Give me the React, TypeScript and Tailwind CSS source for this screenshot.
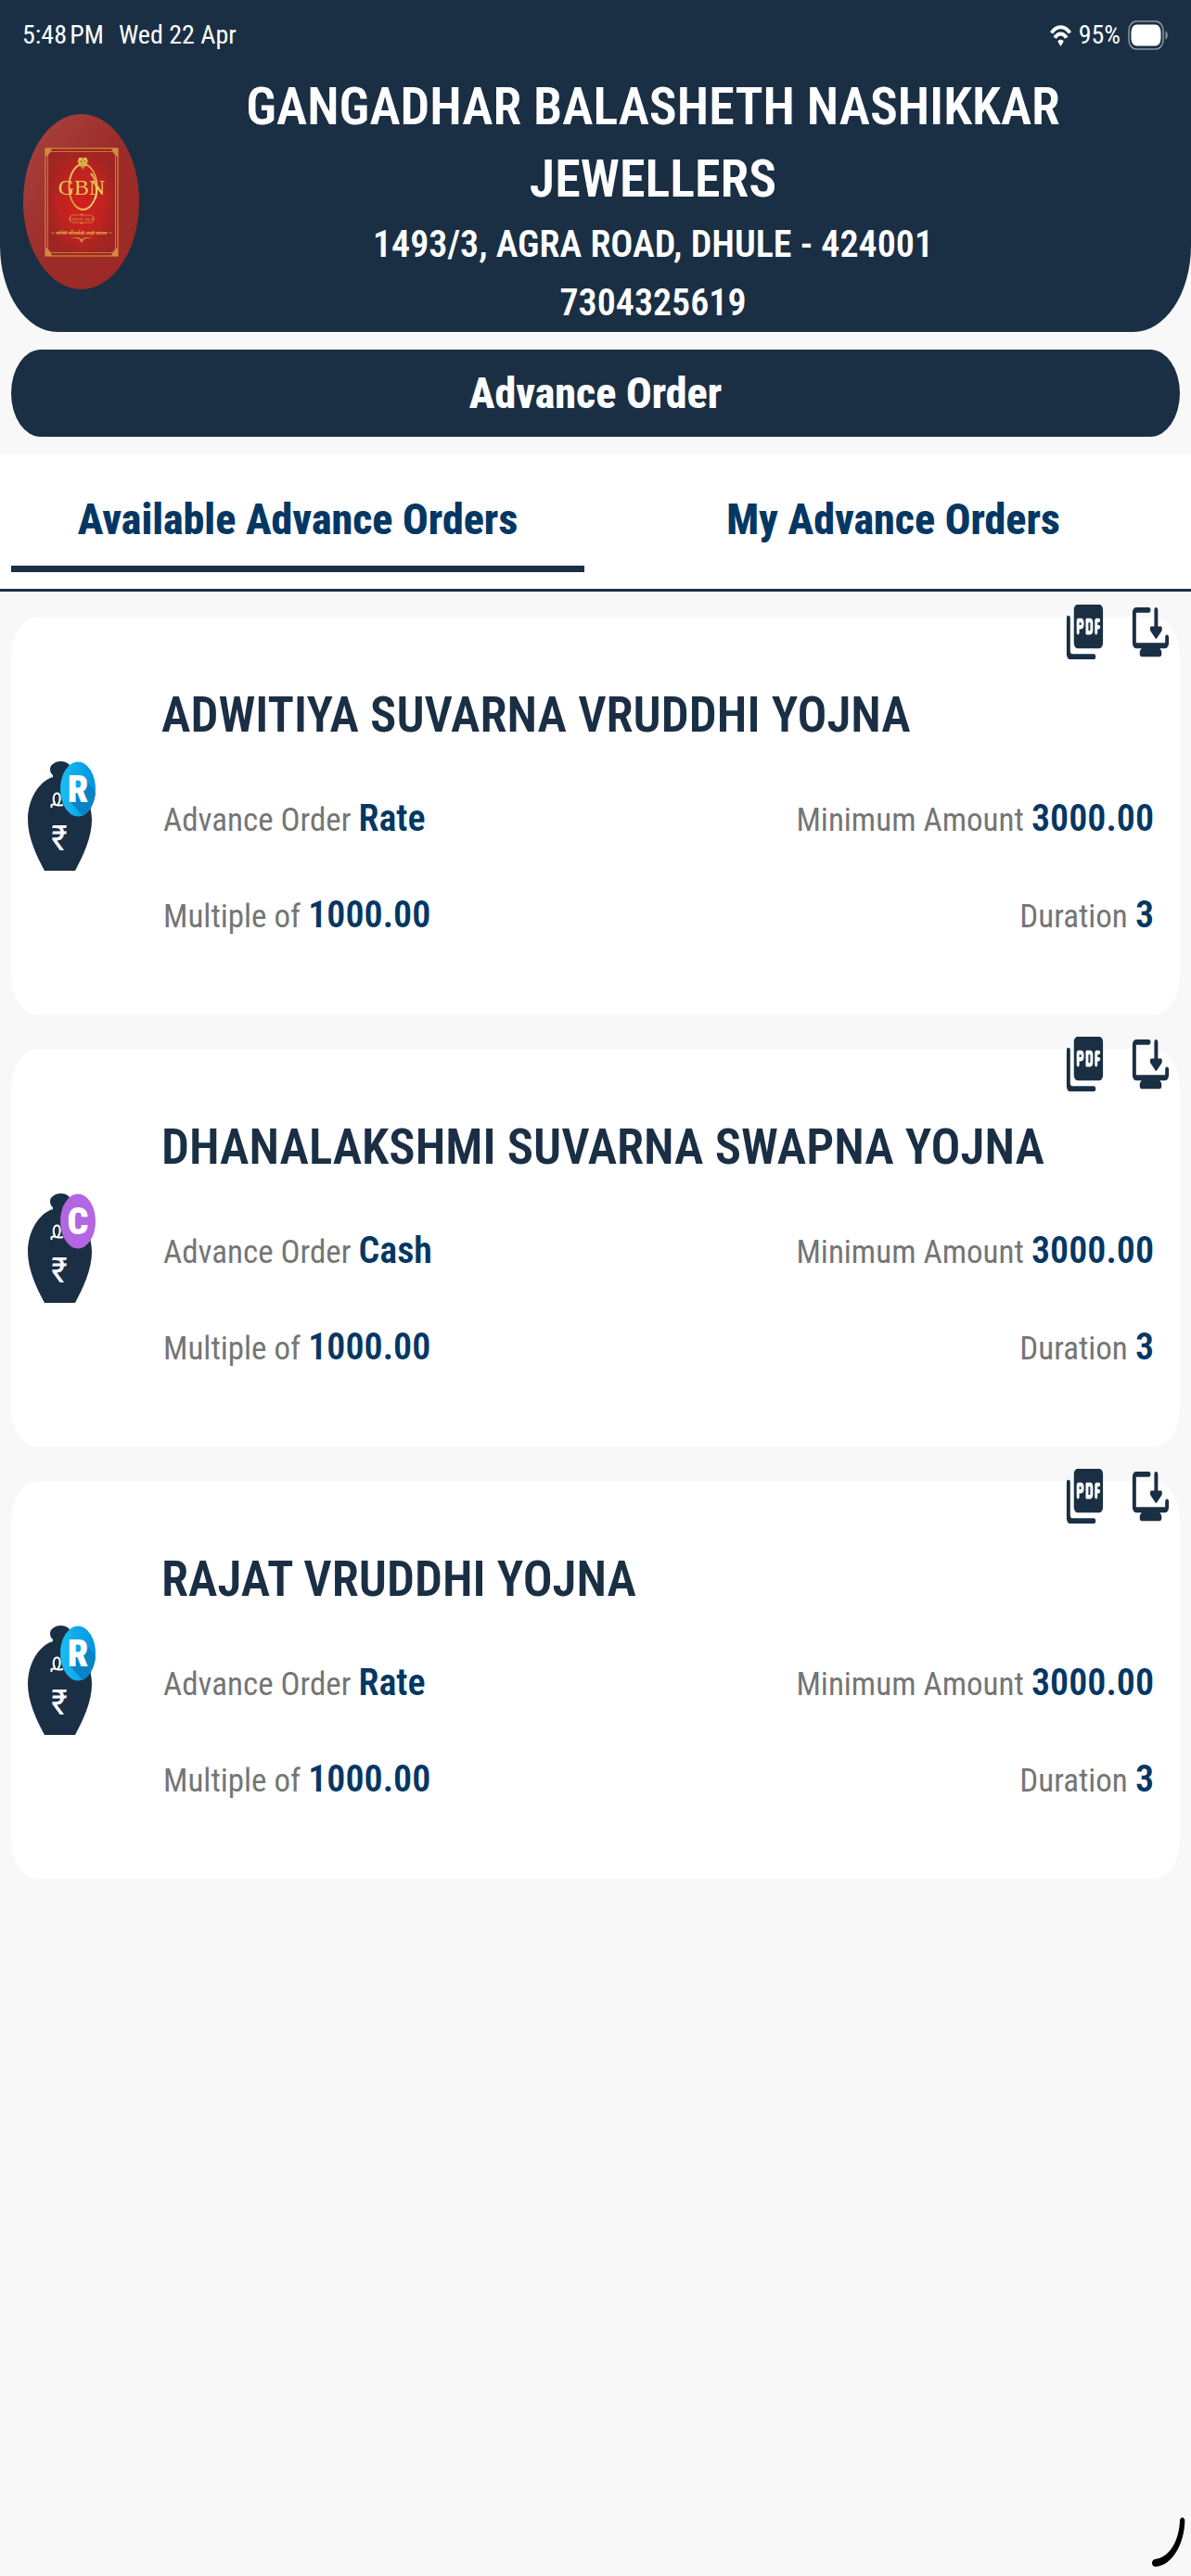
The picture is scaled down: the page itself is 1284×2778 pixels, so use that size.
import React, { useState } from 'react';

interface Scheme {
  name: string;
  type: 'Rate' | 'Cash';
  minimum: string;
  multiple: string;
  duration: number;
}

const schemes: Scheme[] = [
  { name: 'ADWITIYA SUVARNA VRUDDHI YOJNA', type: 'Rate', minimum: '3000.00', multiple: '1000.00', duration: 3 },
  { name: 'DHANALAKSHMI SUVARNA SWAPNA YOJNA', type: 'Cash', minimum: '3000.00', multiple: '1000.00', duration: 3 },
  { name: 'RAJAT VRUDDHI YOJNA', type: 'Rate', minimum: '3000.00', multiple: '1000.00', duration: 3 },
];

const tabs = ['Available Advance Orders', 'My Advance Orders'];

const StatusBar = () => (
  <div className="flex h-[76px] items-center justify-between px-6 text-[28px] text-white">
    <div className="flex gap-4">
      <span>5:48&#8239;PM</span>
      <span>Wed 22 Apr</span>
    </div>
    <div className="flex items-center gap-2">
      <svg width="23" height="24" viewBox="0 0 23 24" fill="none" stroke="white" strokeWidth="4">
        <path d="M1.5 9.5C7 1 16 1 21.5 9.5" />
        <path d="M5.2 14.8C8.8 9 14.2 9 17.8 14.8" />
        <path d="M8.2 18.5C10 16 13 16 14.8 18.5L11.5 24Z" fill="white" stroke="none" />
      </svg>
      <span>95%</span>
      <svg width="44" height="32" viewBox="0 0 44 32" fill="none">
        <rect x="1" y="1" width="37" height="30" rx="8" ry="10" stroke="#8c97a1" strokeWidth="1.5" />
        <rect x="3.5" y="4.5" width="32" height="23" rx="6" ry="8" fill="white" />
        <path d="M40.5 11C43.5 13 43.5 19 40.5 21Z" fill="#8c97a1" />
      </svg>
    </div>
  </div>
);

const Logo = () => (
  <svg width="125" height="189" viewBox="0 0 125 189" className="shrink-0">
    <defs>
      <linearGradient id="logo-bg" x1="0" y1="0" x2="1" y2="1">
        <stop offset="0" stopColor="#a94440" />
        <stop offset="0.5" stopColor="#9c2c29" />
        <stop offset="1" stopColor="#9c2825" />
      </linearGradient>
      <radialGradient id="logo-card">
        <stop offset="0" stopColor="#d3201e" />
        <stop offset="0.6" stopColor="#c02320" />
        <stop offset="1" stopColor="#9e2522" />
      </radialGradient>
      <linearGradient id="gold" x1="0" y1="0" x2="1" y2="1">
        <stop offset="0" stopColor="#f7dc7a" />
        <stop offset="0.5" stopColor="#d79a35" />
        <stop offset="1" stopColor="#f9e68a" />
      </linearGradient>
    </defs>
    <ellipse cx="62.5" cy="94.5" rx="62.5" ry="94.5" fill="url(#logo-bg)" />
    <rect x="24" y="37" width="78" height="116" fill="url(#logo-card)" stroke="#c9793a" strokeWidth="1.5" />
    <rect x="26.5" y="40.5" width="73" height="109" rx="3" fill="none" stroke="#c9793a" strokeWidth="1" />
    <g fill="#d08a45">
      <path d="M24 37H31C30 41 28 44 24 46Z" />
      <path d="M102 37H95C96 41 98 44 102 46Z" />
      <path d="M24 153H31C30 149 28 146 24 144Z" />
      <path d="M102 153H95C96 149 98 146 102 144Z" />
    </g>
    <ellipse cx="64.5" cy="78.5" rx="15" ry="24.5" fill="none" stroke="url(#gold)" strokeWidth="1.8" />
    <path d="M60.5 47H68L70 51L64.3 60L58.5 51Z" fill="#ecc653" />
    <path d="M58.5 51H70M62 51L64.3 59L66.5 51L64.3 47Z" fill="none" stroke="#94551c" strokeWidth="0.6" />
    <text x="63" y="87" textAnchor="middle" fontFamily="Liberation Serif, serif" fontSize="24" fill="#ecc653">GBN</text>
    <path d="M73 64C79 71 80 82 78 91" fill="none" stroke="url(#gold)" strokeWidth="1.8" />
    <rect x="51" y="109" width="24" height="8" rx="2" fill="none" stroke="#cf8840" strokeWidth="0.8" />
    <path d="M49 113L51 110V116ZM77 113L75 110V116ZM63 107L65 109H61ZM63 119L65 117H61Z" fill="#cf8840" />
    <text x="63" y="115" textAnchor="middle" fontFamily="Liberation Serif, serif" fontSize="4" fill="#d99a52">SINCE 1801</text>
    <text x="63" y="130" textAnchor="middle" fontFamily="Noto Sans, sans-serif" fontSize="5" fontWeight="700" fill="#e3ae45">सोनेरी सौंदर्याची शाही परंपरा</text>
    <path d="M30 128H34M92 128H96" stroke="#d99a42" strokeWidth="0.8" />
    <path d="M51 133H60L63 135L66 133H75L66 134.5L63 139L60 134.5Z" fill="#cf8840" />
  </svg>
);

const BagIcon = ({ type }: { type: Scheme['type'] }) => {
  const isRate = type === 'Rate';
  return (
    <svg width="74" height="118" viewBox="0 0 74 118" className="shrink-0">
      <defs>
        <linearGradient id="rate-badge">
          <stop offset="0" stopColor="#1cbcf6" />
          <stop offset="1" stopColor="#0294de" />
        </linearGradient>
      </defs>
      <path
        d="M27 15C23 12 23 5 27 3C31 -1 40 -1 44 3C47 6 45 12 41 15V17C57 22 69 42 69 63C69 82 60 101 51 118H18C9 101 0 82 0 63C0 42 11 22 27 17Z"
        fill="#1a2f44"
      />
      <path d="M29.500 46.500C26 41 28 34.500 31.500 34.500C35 34.500 36 42 32.500 46.500M25.500 50V47C29 45 32 49 38 47" fill="none" stroke="#fff" strokeWidth="2" />
      <text x="34" y="96" textAnchor="middle" fontFamily="Roboto Condensed, Roboto, sans-serif" fontSize="38" fill="#fff">₹</text>
      <ellipse cx="54" cy="30" rx="19" ry="29.5" fill={isRate ? 'url(#rate-badge)' : '#b266e2'} />
      {isRate && <path d="M61 17L73 34C72 45 66 56 59 59L46 44Z" fill="#0884c6" />}
      <text x="54" y="44" textAnchor="middle" fontFamily="Roboto Condensed, Roboto, sans-serif" fontSize="40" fontWeight="900" fill="#fff">
        {isRate ? 'R' : 'C'}
      </text>
    </svg>
  );
};

const PdfIcon = () => (
  <svg width="47" height="71" viewBox="0 0 24 24" preserveAspectRatio="none" fill="#1a2f44">
    <path d="M20 2H8c-1.1 0-2 .9-2 2v12c0 1.1.9 2 2 2h12c1.1 0 2-.9 2-2V4c0-1.1-.9-2-2-2zm-8.5 7.5c0 .83-.67 1.5-1.5 1.5H9v1.25c0 .41-.34.75-.75.75s-.75-.34-.75-.75V8c0-.55.45-1 1-1H10c.83 0 1.5.67 1.5 1.5v1zm5 2c0 .83-.67 1.5-1.5 1.5h-2c-.28 0-.5-.22-.5-.5v-5c0-.28.22-.5.5-.5h2c.83 0 1.5.67 1.5 1.5v3zm4-3.75c0 .41-.34.75-.75.75H19v1h.75c.41 0 .75.34.75.75s-.34.75-.75.75H19v1.25c0 .41-.34.75-.75.75s-.75-.34-.75-.75V8c0-.55.45-1 1-1h1.25c.41 0 .75.34.75.75zM9 9.5h1v-1H9v1zM3 6c-.55 0-1 .45-1 1v13c0 1.1.9 2 2 2h13c.55 0 1-.45 1-1s-.45-1-1-1H5c-.55 0-1-.45-1-1V7c0-.55-.45-1-1-1zm11 5.5h1v-3h-1v3z" />
  </svg>
);

const DownloadIcon = () => (
  <svg width="47" height="71" viewBox="0 0 24 24" preserveAspectRatio="none" fill="#1a2f44">
    <path d="M21 13c-.55 0-1 .45-1 1v2H4V5h7c.55 0 1-.45 1-1s-.45-1-1-1H4c-1.1 0-2 .9-2 2v11c0 1.1.9 2 2 2h3l-.7.7c-.2.2-.3.45-.3.7V20c0 .55.45 1 1 1h10c.55 0 1-.45 1-1v-.6c0-.25-.1-.5-.3-.7L17 18h3c1.1 0 2-.9 2-2v-2c0-.55-.45-1-1-1z" />
    <path d="M14.65 14.35l-2.8-2.8c-.32-.32-.1-1.55.35-1.55H14V4c0-.55.45-1 1-1s1 .45 1 1v6h1.8c.45 0 .67 1.23.35 1.55l-2.8 2.8c-.2.2-.5.2-.7 0z" />
  </svg>
);

const Field = ({ label, value }: { label: string; value: string | number }) => (
  <p className="text-[35px] leading-[58px] text-[#757575]">
    {label} <span className="text-[40px] font-semibold text-[#053764]">{value}</span>
  </p>
);

const SchemeCard = ({ scheme }: { scheme: Scheme }) => (
  <article className="relative flex items-center rounded-[28px_/_42px] bg-white pr-7 pl-[18px]">
    {/* Document actions overlap the top edge of the card */}
    <div className="absolute -top-5 right-2 flex gap-6">
      <button aria-label="View PDF"><PdfIcon /></button>
      <button aria-label="Download"><DownloadIcon /></button>
    </div>
    <BagIcon type={scheme.type} />
    <div className="ml-[70px] flex-1 pt-[65px] pb-[76px]">
      <h2 className="text-[53px] leading-[80px] font-semibold text-[#1a2f44]">{scheme.name}</h2>
      <div className="mt-[43px] flex flex-col gap-11 pl-0.5">
        <div className="flex justify-between">
          <Field label="Advance Order" value={scheme.type} />
          <Field label="Minimum Amount" value={scheme.minimum} />
        </div>
        <div className="flex justify-between">
          <Field label="Multiple of" value={scheme.multiple} />
          <Field label="Duration" value={scheme.duration} />
        </div>
      </div>
    </div>
  </article>
);

export default function App() {
  const [active, setActive] = useState(0);

  return (
    <div className="min-h-screen bg-[#f8f8f8] font-['Roboto_Condensed',Roboto,sans-serif]">
      <header className="rounded-b-[62px_93px] bg-[#1a2f44] text-white">
        <StatusBar />
        <div className="flex items-center pl-[25px]">
          <Logo />
          <div className="flex-1 pr-[26px] text-center font-semibold">
            <h1 className="text-[56px] leading-[78px]">GANGADHAR BALASHETH NASHIKKAR JEWELLERS</h1>
            <p className="text-[40px] leading-[63px]">1493/3, AGRA ROAD, DHULE - 424001</p>
            <p className="text-[40px] leading-[63px]">7304325619</p>
          </div>
        </div>
      </header>

      <div className="mx-3 my-[19px] rounded-[32px_/_47px] bg-[#1a2f44] text-center text-[46px] leading-[94px] font-extrabold text-white">
        Advance Order
      </div>

      <nav className="flex gap-6 border-b-[3px] border-[#1a2f44] bg-white px-3 pb-[18px]">
        {tabs.map((tab, i) => (
          <button
            key={tab}
            onClick={() => setActive(i)}
            className={`flex-1 border-b-[7px] pt-6 pb-1 text-[46px] leading-[92px] font-extrabold text-[#053764] ${active === i ? 'border-[#1a2f44]' : 'border-transparent'}`}
          >
            {tab}
          </button>
        ))}
      </nav>

      <main className="flex flex-col gap-[38px] px-3 pt-7">
        {schemes.map((scheme) => (
          <SchemeCard key={scheme.name} scheme={scheme} />
        ))}
      </main>

      {/* Spinner arc in the screen corner */}
      <svg className="fixed right-0 bottom-0" width="84" height="98" viewBox="0 0 252 294">
        <path d="M232 112C232 190 190 262 137 264Q126 262 126 251Q127 240 137 239C180 237 215 180 216 112Q224 96 232 112Z" fill="#000" />
      </svg>
    </div>
  );
}
